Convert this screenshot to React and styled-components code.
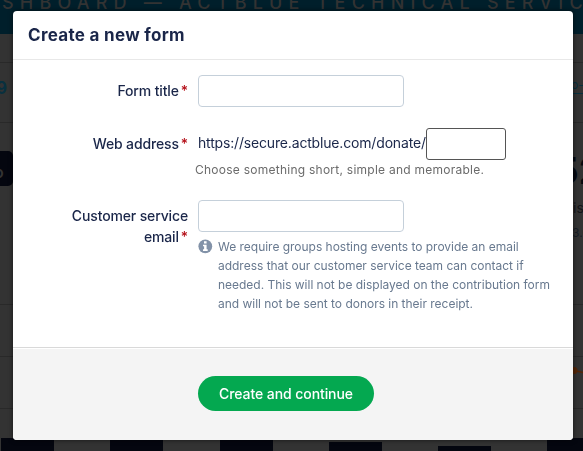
import styled, { createGlobalStyle } from 'styled-components';

const GlobalStyle = createGlobalStyle`
  * {
    box-sizing: border-box;
  }

  body {
    margin: 0;
    overflow: hidden;
    background: #333;
    font-family: Inter, 'Liberation Sans', sans-serif;
    color: #1a2649;
  }
`;

/* Dashboard behind the dialog, already dimmed */

const Dashboard = styled.div`
  height: 451px;
  overflow: hidden;
  display: flex;
  flex-direction: column;
`;

const Banner = styled.header`
  flex: none;
  height: 34px;
  background: #001f2b;
  color: #333;
  font-size: 18px;
  font-weight: 500;
  line-height: 22px;
  letter-spacing: 6.2px;
  white-space: nowrap;
  overflow: hidden;

  span {
    display: block;
    margin: -8px 0 0 2px;
  }
`;

const Strip = styled.div`
  flex: none;
  display: flex;
  justify-content: space-between;
  height: ${(props) => props.$height}px;
  border-bottom: 1px solid #292929;
  overflow: hidden;
`;

const Total = styled.span`
  margin: 14px 0 0 -4px;
  font-size: 17px;
  font-weight: 700;
  line-height: 22px;
  color: #08303f;
`;

const DashLink = styled.span`
  width: 12px;
  height: 16px;
  margin-top: 15px;
  font-size: 12px;
  line-height: 14px;
  white-space: nowrap;
  color: #08303f;
  border-bottom: 1px solid #08303f;
  overflow: hidden;
`;

const DarkButton = styled.span`
  width: 13px;
  height: 35px;
  margin-top: 28px;
  padding-top: 12px;
  border-radius: 0 5px 5px 0;
  background: #04060f;
  color: #333;
  font-size: 16px;
  font-weight: 600;
  line-height: 18px;
  text-indent: -6px;
  overflow: hidden;
`;

const Stats = styled.div`
  width: 30px;
  padding-top: 25px;
  color: #05080f;
  white-space: nowrap;
  overflow: hidden;
`;

const StatNumber = styled.div`
  margin-left: 2px;
  font-size: 37px;
  font-weight: 700;
  line-height: 45px;
`;

const StatLabel = styled.div`
  margin: 6px 0 0 20px;
  font-size: 14px;
  line-height: 18px;
  color: #141519;
`;

const StatDetail = styled.div`
  margin: 7px 0 0 19px;
  font-size: 12px;
  line-height: 17px;
  color: #181e26;
`;

/* Dialog */

const Overlay = styled.div`
  position: fixed;
  inset: 0;
  padding: 11px 10px 11px 13px;
  display: flex;
`;

const Dialog = styled.form`
  flex: 1;
  display: flex;
  flex-direction: column;
  background: #fff;
  border-radius: 4px;
  box-shadow: 0 0 5px rgba(0, 0, 0, 0.6);
  overflow: hidden;
  height: 429px;
`;

const DialogHeader = styled.div`
  height: 49px;
  padding: 15px 15px 0;
  border-bottom: 1px solid #e8e8e8;
`;

const Title = styled.h1`
  margin: 0;
  font-size: 17px;
  font-weight: 700;
  line-height: 19px;
  letter-spacing: 0.3px;
  color: #1a2649;
`;

const Fields = styled.div`
  flex: 1;
  padding-top: 15px;
`;

const Field = styled.div`
  display: grid;
  grid-template-columns: 175px 1fr;
  column-gap: 10px;
  height: ${(props) => props.$height}px;
`;

const Label = styled.label`
  padding: 5px 0 0 40px;
  font-size: 14px;
  font-weight: 500;
  line-height: 21px;
  letter-spacing: -0.14px;
  text-align: right;

  span {
    margin-left: 2px;
    color: #b5121b;
  }
`;

const Input = styled.input`
  display: block;
  width: ${(props) => props.$width || 206}px;
  height: 32px;
  padding: 0 8px;
  border: 1px solid ${(props) => (props.$dark ? '#555' : '#c5d0da')};
  border-radius: ${(props) => (props.$dark ? 3 : 4)}px;
  background: #fff;
  font: inherit;
  outline: none;
`;

const AddressRow = styled.div`
  display: flex;
`;

const Prefix = styled.span`
  width: 228px;
  font-size: 14px;
  line-height: 30px;
  letter-spacing: -0.17px;
  white-space: nowrap;
`;

const Hint = styled.p`
  margin: 2px 0 0 -3px;
  font-size: 12px;
  line-height: 16px;
  letter-spacing: 0.25px;
  color: #6b6b6b;
`;

const Note = styled.div`
  display: flex;
  gap: 5px;
  margin-top: 5px;

  svg {
    flex: none;
    margin-top: 2px;
  }

  p {
    margin: 0;
    font-size: 12px;
    line-height: 19px;
    letter-spacing: -0.02px;
    color: #68798f;
    white-space: nowrap;
  }
`;

const DialogFooter = styled.div`
  height: 93px;
  padding: 28px 0 0 185px;
  border-top: 1px solid #d9d9d9;
  background: #f4f4f4;
  box-shadow: inset 0 1px 0 #fff;
`;

const SubmitButton = styled.button`
  width: 176px;
  height: 35px;
  padding: 0;
  border: 0;
  border-radius: 18px;
  background: #04a850;
  color: #fff;
  font-family: inherit;
  font-size: 14px;
  font-weight: 500;
  letter-spacing: -0.08px;
`;

const bars = [
  { x: 1, y: 133 },
  { x: 110, y: 133 },
  { x: 220, y: 133 },
  { x: 329, y: 137 },
  { x: 438, y: 141 },
  { x: 547, y: 133 },
];

const Chart = () => (
  <svg width="583" height="146" viewBox="0 0 583 146">
    <path d="M0 51.5H583M0 103.5H583" stroke="#292929" />
    {bars.map((bar) => (
      <rect key={bar.x} x={bar.x} y={bar.y} width="53" height="20" fill="#04060f" />
    ))}
    <path d="M540 62L574 65.5L583 67.5" stroke="#542608" strokeWidth="1.5" fill="none" />
    <circle cx="574" cy="65.5" r="3.5" fill="#542608" />
  </svg>
);

const InfoIcon = () => (
  <svg width="15" height="15" viewBox="0 0 15 15">
    <circle cx="7.3" cy="7.3" r="6.9" fill="#8292a8" />
    <path
      d="M6 2.2h2.6v2.3H6zM5 5.7h3.6v4.5h1.1v1.7H5v-1.7h1.1V7.3H5z"
      fill="#fff"
    />
  </svg>
);

function App() {
  return (
    <>
      <GlobalStyle />

      <Dashboard aria-hidden="true">
        <Banner>
          <span>SHBOARD — ACTBLUE TECHNICAL SERVICES</span>
        </Banner>
        <Strip $height={29} />
        <Strip $height={60}>
          <Total>9</Total>
          <DashLink>o-e</DashLink>
        </Strip>
        <Strip $height={182}>
          <DarkButton>o</DarkButton>
          <Stats>
            <StatNumber>52</StatNumber>
            <StatLabel>is</StatLabel>
            <StatDetail>3.0</StatDetail>
          </Stats>
        </Strip>
        <Chart />
      </Dashboard>

      <Overlay>
        <Dialog onSubmit={(e) => e.preventDefault()}>
          <DialogHeader>
            <Title>Create a new form</Title>
          </DialogHeader>

          <Fields>
            <Field $height={53}>
              <Label htmlFor="title">
                Form title<span>*</span>
              </Label>
              <Input id="title" type="text" />
            </Field>

            <Field $height={72}>
              <Label htmlFor="address">
                Web address<span>*</span>
              </Label>
              <div>
                <AddressRow>
                  <Prefix>https://secure.actblue.com/donate/</Prefix>
                  <Input id="address" type="text" $width={80} $dark />
                </AddressRow>
                <Hint>Choose something short, simple and memorable.</Hint>
              </div>
            </Field>

            <Field $height={110}>
              <Label htmlFor="email">
                Customer service email<span>*</span>
              </Label>
              <div>
                <Input id="email" type="email" />
                <Note>
                  <InfoIcon />
                  <p>
                    We require groups hosting events to provide an email
                    <br />
                    address that our customer service team can contact if
                    <br />
                    needed. This will not be displayed on the contribution form
                    <br />
                    and will not be sent to donors in their receipt.
                  </p>
                </Note>
              </div>
            </Field>
          </Fields>

          <DialogFooter>
            <SubmitButton type="submit">Create and continue</SubmitButton>
          </DialogFooter>
        </Dialog>
      </Overlay>
    </>
  );
}

export default App;
